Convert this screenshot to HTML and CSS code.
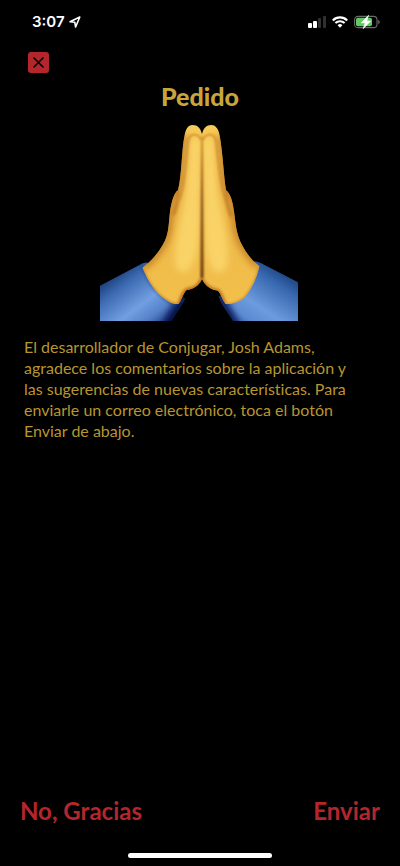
FILE: index.html
```html
<!DOCTYPE html>
<html lang="es">
<head>
<meta charset="utf-8">
<meta name="viewport" content="width=device-width, initial-scale=1">
<title>Pedido</title>
<link rel="stylesheet" href="styles.css">
</head>
<body>
<div class="screen">
  <header class="status">
    <div class="status-time">
      <span>3:07</span>
      <svg width="12" height="12" viewBox="0 0 12 12" aria-hidden="true"><path d="M1 5.800 10.800 1 6.600 11 5.800 6.300Z" fill="none" stroke="#fff" stroke-width="1.600" stroke-linejoin="round"/></svg>
    </div>
    <div class="status-icons">
      <svg width="18" height="12" viewBox="0 0 18 12" aria-hidden="true"><rect x="0" y="7" width="4" height="5" rx="1" fill="#fff"/><rect x="5" y="5" width="4" height="7" rx="1" fill="#fff"/><rect x="10" y="2" width="3" height="10" rx="1" fill="#303032"/><rect x="15" y="0" width="3" height="12" rx="1" fill="#303032"/></svg>
      <svg width="16" height="12" viewBox="0 0 16 12" aria-hidden="true"><g fill="none" stroke="#fff" stroke-width="2.1"><path d="M.8 4.4a10.2 10.2 0 0 1 14.4 0"/><path d="M3.4 7.1a6.5 6.5 0 0 1 9.2 0"/></g><path d="M8 11.7 5.6 9.3a3.4 3.4 0 0 1 4.8 0Z" fill="#fff"/></svg>
      <svg width="26" height="14" viewBox="0 0 26 14" aria-hidden="true"><rect x=".6" y="1.4" width="22.4" height="11.2" rx="3.4" fill="none" stroke="#6b6b6e" stroke-width="1.1"/><path d="M24.2 5v4c1-.3 1.5-1.1 1.5-2s-.5-1.7-1.5-2Z" fill="#6b6b6e"/><rect x="2" y="2.8" width="16" height="8.4" rx="2" fill="#62c962"/><path d="M14.6.2 7.2 7.9h4L9.100 13.800l7.600-7.700h-4Z" fill="#fff" stroke="#fff" stroke-width=".6"/></svg>
    </div>
  </header>

  <main class="content">
    <button class="close" type="button" aria-label="Cerrar">
      <svg width="11" height="11" viewBox="0 0 11 11" aria-hidden="true"><path d="M1 1l9 9M10 1l-9 9" stroke="#000" stroke-width="1.6" stroke-linecap="round"/></svg>
    </button>
    <h1 class="title">Pedido</h1>
    <svg class="hands" viewBox="30 147 594 591" role="img" aria-label="Manos juntas">
      <defs>
        <linearGradient id="sleeveL" gradientUnits="userSpaceOnUse" x1="85" y1="590" x2="225" y2="775">
          <stop offset="0" stop-color="#1c4280"/><stop offset=".2" stop-color="#3f6db5"/><stop offset=".52" stop-color="#719fe1"/><stop offset=".72" stop-color="#5581c9"/><stop offset="1" stop-color="#0a2264"/>
        </linearGradient>
        <linearGradient id="sleeveR" gradientUnits="userSpaceOnUse" x1="575" y1="583" x2="455" y2="765">
          <stop offset="0" stop-color="#1c4280"/><stop offset=".2" stop-color="#3767ae"/><stop offset=".6" stop-color="#6c9bde"/><stop offset=".82" stop-color="#5c8bd2"/><stop offset="1" stop-color="#2b559f"/>
        </linearGradient>
        <linearGradient id="skin" gradientUnits="userSpaceOnUse" x1="0" y1="150" x2="0" y2="690">
          <stop offset="0" stop-color="#f9cb59"/><stop offset=".4" stop-color="#edb849"/><stop offset="1" stop-color="#f2bf4b"/>
        </linearGradient>
        <linearGradient id="seam" gradientUnits="userSpaceOnUse" x1="0" y1="175" x2="0" y2="620">
          <stop offset="0" stop-color="#c28128"/><stop offset=".45" stop-color="#8a501b"/><stop offset="1" stop-color="#6d3914"/>
        </linearGradient>
        <filter id="b3" filterUnits="userSpaceOnUse" x="30" y="100" width="600" height="660"><feGaussianBlur stdDeviation="3"/></filter>
        <filter id="b5" filterUnits="userSpaceOnUse" x="30" y="100" width="600" height="660"><feGaussianBlur stdDeviation="5"/></filter>
        <filter id="b10" filterUnits="userSpaceOnUse" x="0" y="100" width="660" height="700"><feGaussianBlur stdDeviation="11"/></filter>
        <path id="left" d="M336 178C331 158 323 150 308 150C293 150 287 164 284 180C274 228 276 300 264 346C251 355 245 380 240 410C235 452 238 475 218 510C200 541 180 561 158 578C174 620 198 654 228 674C242 684 255 689 266 686C276 673 279 655 290 645C307 643 326 635 336 612Z"/>
        <path id="right" d="M336 178C341 158 349 150 364 150C379 150 386 165 389 182C398 230 401 300 408 346C422 357 428 380 432 410C438 452 438 475 456 510C472 540 490 560 508 574C500 610 486 640 465 665C450 681 425 688 407 687C397 675 394 658 384 647C366 645 347 635 336 612Z"/>
        <path id="sleeveShapeL" d="M30 632 158 565Q170 561 176 564L284 672Q281 680 272 694L243 738H30Z"/>
        <path id="sleeveShapeR" d="M624 622 514 565Q500 558 490 559L388 665Q390 678 398 690L430 738H624Z"/>
        <clipPath id="clipL"><use href="#left"/></clipPath>
        <clipPath id="clipR"><use href="#right"/></clipPath>
        <clipPath id="clipSL"><use href="#sleeveShapeL"/></clipPath>
        <clipPath id="clipSR"><use href="#sleeveShapeR"/></clipPath>
      </defs>
      <use href="#sleeveShapeL" fill="url(#sleeveL)"/>
      <g clip-path="url(#clipSL)"><path d="M300 640 225 770" stroke="#000a48" stroke-width="34" filter="url(#b10)"/><path d="M148 562C170 625 204 668 250 690L285 675" fill="none" stroke="#1c4286" stroke-width="3" filter="url(#b3)"/></g>
      <use href="#sleeveShapeR" fill="url(#sleeveR)"/>
      <g clip-path="url(#clipSR)"><path d="M370 630 440 770" stroke="#000a48" stroke-width="28" filter="url(#b10)"/></g>

      <use href="#left" fill="url(#skin)"/>
      <g clip-path="url(#clipL)">
        <path d="M284 180C274 228 276 300 264 346C251 355 245 380 240 410C235 452 238 475 218 510C200 541 180 561 158 578" fill="none" stroke="#bc7622" stroke-width="18" filter="url(#b10)"/>
        <path d="M262 346Q270 372 250 420" fill="none" stroke="#c47d25" stroke-width="9" filter="url(#b5)"/>
        <path d="M303 190H330V400Q332 530 304 575Q280 610 256 575Q250 530 268 450Q292 340 303 190Z" fill="#fad66c" opacity=".9" filter="url(#b10)"/>
        <path d="M334 196C326 174 299 172 294 198C288 250 286 325 268 375" fill="none" stroke="#cf8d2f" stroke-width="5" filter="url(#b3)"/>
        <path d="M268 690C278 668 277 654 292 645C312 643 330 633 336 612" fill="none" stroke="#b96818" stroke-width="13" filter="url(#b5)"/>
        <path d="M158 578C174 620 198 654 228 674Q249 688 268 686" fill="none" stroke="#c77a20" stroke-width="4" filter="url(#b3)"/>
      </g>
      <use href="#right" fill="url(#skin)"/>
      <g clip-path="url(#clipR)">
        <path d="M389 182C398 230 401 300 408 346C422 357 428 380 432 410C438 452 438 475 456 510C472 540 490 560 508 574" fill="none" stroke="#bc7622" stroke-width="18" filter="url(#b10)"/>
        <path d="M409 346Q404 374 424 425" fill="none" stroke="#c47d25" stroke-width="9" filter="url(#b5)"/>
        <path d="M369 190H342V400Q340 530 362 575Q386 610 412 575Q418 530 403 450Q378 340 369 190Z" fill="#fad66c" opacity=".9" filter="url(#b10)"/>
        <path d="M338 196C346 174 373 172 378 198C384 250 390 325 409 378" fill="none" stroke="#cf8d2f" stroke-width="5" filter="url(#b3)"/>
        <path d="M405 690C398 668 394 655 384 647C365 645 344 633 336 612" fill="none" stroke="#bd711d" stroke-width="10" filter="url(#b5)"/>
        <path d="M508 574C500 610 486 640 465 665Q440 689 407 687" fill="none" stroke="#c77a20" stroke-width="4" filter="url(#b3)"/>
      </g>
      <path d="M334 184H338L341 606Q336 618 331 606Z" fill="url(#seam)" filter="url(#b3)"/>
    </svg>
    <p class="message">El desarrollador de Conjugar, Josh Adams, agradece los comentarios sobre la aplicación y las sugerencias de nuevas características. Para enviarle un correo electrónico, toca el botón Enviar de abajo.</p>
  </main>

  <footer class="footer">
    <div class="actions">
      <button class="action" type="button">No, Gracias</button>
      <button class="action" type="button">Enviar</button>
    </div>
    <div class="home"></div>
  </footer>
</div>
</body>
</html>
```
FILE: styles.css
```css
* {
  box-sizing: border-box;
}

body {
  margin: 0;
  background: #000;
  color: #b7962f;
  font-family: "Avenir Next", Lato, sans-serif;
}

.screen {
  display: flex;
  flex-direction: column;
  min-height: 100vh;
}

.status {
  display: flex;
  justify-content: space-between;
  align-items: center;
  height: 44px;
  padding: 0 20px 0 32px;
  color: #fff;
  font: 600 15px/20px Inter, sans-serif;
}

.status-time,
.status-icons {
  display: flex;
  align-items: center;
  gap: 4px;
}

.status-icons {
  gap: 6px;
}

.content {
  display: flex;
  flex: 1;
  flex-direction: column;
  padding: 8px 24px 0;
}

.close {
  display: grid;
  place-items: center;
  width: 21px;
  height: 21px;
  margin-left: 4px;
  padding: 0;
  border: 0;
  border-radius: 3px;
  background: #b3262c;
}

.title {
  margin: 7px 0 12px;
  color: #c8a63c;
  font-size: 25px;
  font-weight: 900;
  line-height: 32px;
  text-align: center;
}

.hands {
  width: 198px;
  height: 197px;
  margin-left: 76px;
}

.message {
  margin: 15px 0 0;
  padding-right: 16px;
  font-size: 16px;
  line-height: 21px;
  font-variant-ligatures: none;
}

.actions {
  display: flex;
  justify-content: space-between;
  padding: 0 20px;
}

.action {
  padding: 0;
  border: 0;
  background: none;
  color: #b3262c;
  font: 700 24px/32px "Avenir Next", Lato, sans-serif;
}

.home {
  width: 144px;
  height: 5px;
  margin: 26px auto 8px;
  border-radius: 3px;
  background: #fff;
}
```
